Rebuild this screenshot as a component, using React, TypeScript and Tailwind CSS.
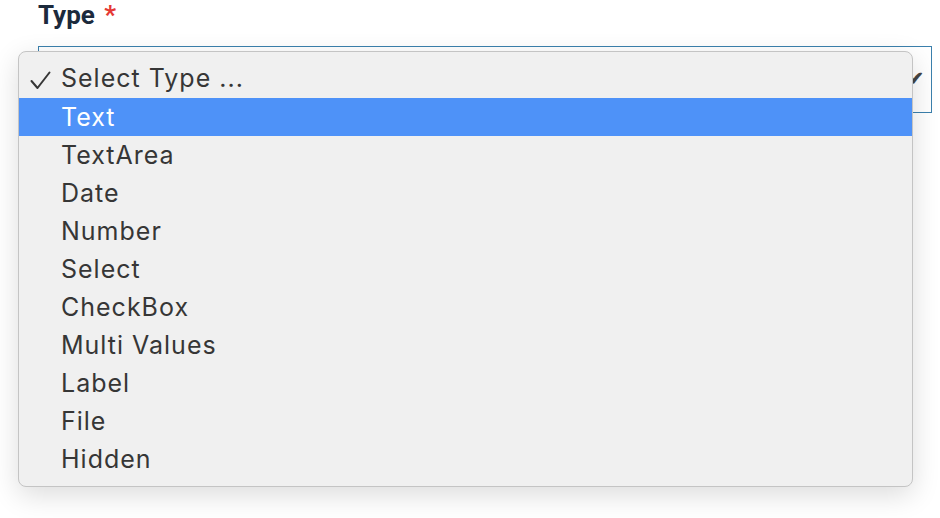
const options = [
  "Text",
  "TextArea",
  "Date",
  "Number",
  "Select",
  "CheckBox",
  "Multi Values",
  "Label",
  "File",
  "Hidden",
];

export default function App() {
  return (
    <div className="relative h-[518px] w-[940px] overflow-hidden bg-white font-['Inter',sans-serif]">
      {/* Field label */}
      <div className="pl-[38px] font-['Roboto',sans-serif] text-[26px] font-bold leading-[30px] text-[#1c2a3c]">
        Type <span className="ml-[3px] text-[#e53935]">*</span>
      </div>

      {/* Select box behind the open menu */}
      <div className="ml-[38px] mt-[16px] flex h-[67px] w-[894px] items-center justify-end border-[1.5px] border-[#3b80ad] pr-[7px]">
        <span className="text-[19px] font-bold text-[#444]">✔</span>
      </div>

      {/* Open native menu */}
      <div className="absolute left-[18px] top-[51px] w-[895px] rounded-[8px] border border-[#c4c4c4] bg-[#f0f0f0] py-[8px] shadow-[0_8px_28px_rgba(0,0,0,0.14)]">
        <div className="flex h-[38px] items-center text-[25px] tracking-[1px] text-[#363636]">
          <span className="flex w-[42px] justify-start pl-[11px] pt-[2px]">
            <svg width="21" height="19" viewBox="0 0 21 19" fill="none">
              <path d="M1.5 10 L7.5 17 L19.5 1.5" stroke="#363636" strokeWidth="2" strokeLinecap="round" strokeLinejoin="round" />
            </svg>
          </span>
          <span>Select Type ...</span>
        </div>
        {options.map((o, i) => (
          <div
            key={o}
            className={
              i === 0
                ? "flex h-[38px] items-center bg-[#4e92f8] pl-[42px] pt-[1px] text-[25px] tracking-[1px] text-white"
                : "flex h-[38px] items-center pl-[42px] pt-[1px] text-[25px] tracking-[1px] text-[#363636]"
            }
          >
            {o}
          </div>
        ))}
      </div>
    </div>
  );
}
